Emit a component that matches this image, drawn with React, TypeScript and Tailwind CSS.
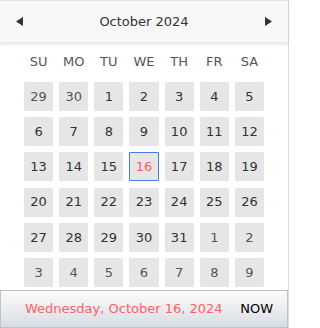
const weeks: { d: number; other: boolean }[][] = [
  [29, 30, 1, 2, 3, 4, 5],
  [6, 7, 8, 9, 10, 11, 12],
  [13, 14, 15, 16, 17, 18, 19],
  [20, 21, 22, 23, 24, 25, 26],
  [27, 28, 29, 30, 31, 1, 2],
  [3, 4, 5, 6, 7, 8, 9],
].map((row, r) =>
  row.map((d) => ({ d, other: (r === 0 && d > 20) || (r >= 4 && d < 10) }))
);

const dayNames = ["SU", "MO", "TU", "WE", "TH", "FR", "SA"];

export default function App() {
  return (
    <div className="w-[290px] h-[328px] bg-white font-['DejaVu_Sans',Verdana,sans-serif] overflow-hidden">
      <div className="w-[289px] h-full border-r border-[#dedede] flex flex-col">
        {/* Header */}
        <div className="h-[42px] shrink-0 bg-[#f8f8f8] border-t border-[#e6e6e6] shadow-[0_2px_4px_rgba(0,0,0,0.12)] flex items-center justify-between px-[16px] relative z-10">
          <svg width="7" height="9" viewBox="0 0 7 9">
            <path d="M7 0 L0 4.5 L7 9 Z" fill="#333" />
          </svg>
          <span className="text-[13px] text-[#333]">October 2024</span>
          <svg width="7" height="9" viewBox="0 0 7 9">
            <path d="M0 0 L7 4.5 L0 9 Z" fill="#333" />
          </svg>
        </div>

        {/* Day names */}
        <div className="w-[240px] mx-auto grid grid-cols-7 gap-x-[6px] mt-[11px] h-[18px]">
          {dayNames.map((n) => (
            <div key={n} className="text-center text-[13px] leading-[18px] text-[#555]">
              {n}
            </div>
          ))}
        </div>

        {/* Days */}
        <div className="w-[240px] mx-auto grid grid-cols-7 gap-x-[6px] gap-y-[6.2px] mt-[11px]">
          {weeks.flat().map((c, i) => {
            const today = !c.other && c.d === 16;
            return (
              <div
                key={i}
                className={`h-[29px] rounded-[1px] bg-[#e6e6e6] flex items-center justify-center text-[13px] ${
                  today
                    ? "border border-[#3d7ff0] text-[#ff5f63]"
                    : c.other
                    ? "text-[#555]"
                    : "text-[#333]"
                }`}
              >
                {c.d}
              </div>
            );
          })}
        </div>

        {/* Footer */}
        <div className="mt-[3px] h-[38px] shrink-0 border border-[#bcc4cb] bg-gradient-to-b from-[#fbfbfc] to-[#d9dde1] flex items-center pl-[24px] pr-[14px] justify-between">
          <span className="text-[13px] text-[#ff5f63]">Wednesday, October 16, 2024</span>
          <span className="text-[13px] text-black">NOW</span>
        </div>
      </div>
    </div>
  );
}
